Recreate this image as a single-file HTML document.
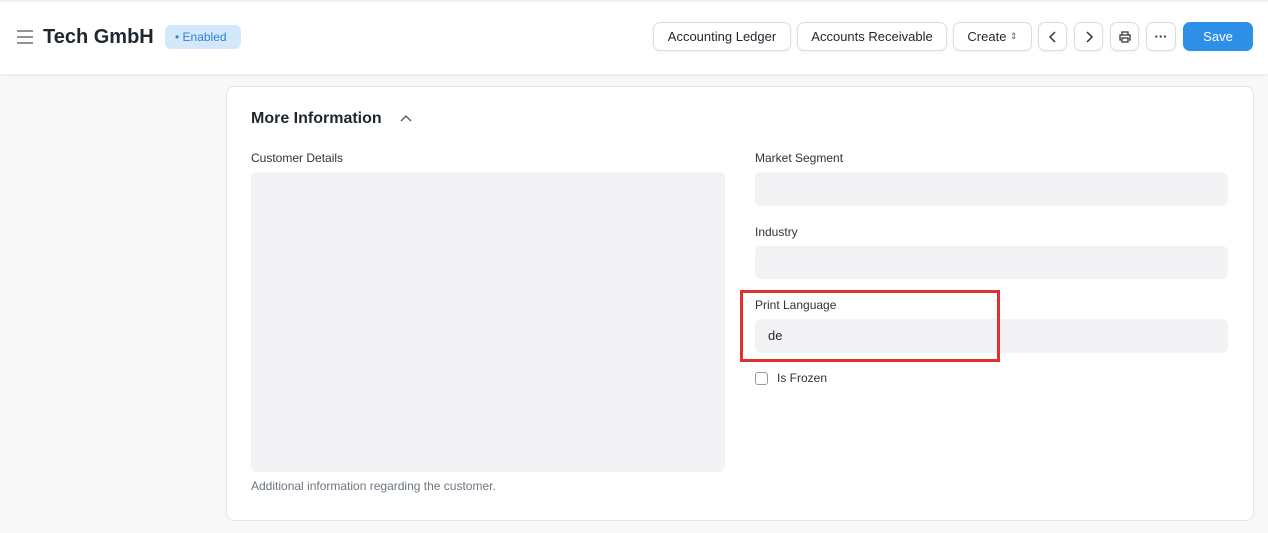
<!DOCTYPE html>
<html><head><style>
*{box-sizing:border-box;margin:0;padding:0}
body{width:1268px;height:533px;background:#f8f8f8;font-family:"Liberation Sans",sans-serif;color:#1f272e;position:relative;overflow:hidden}
.hdr{position:absolute;left:0;top:0;width:1268px;height:74px;background:#fff;box-shadow:0 1px 3px rgba(0,0,0,.08);border-top:2px solid #f0f0f0}
.abs{position:absolute}
.btn{position:absolute;top:20px;height:29px;border:1px solid #dcdcdc;border-radius:7px;background:#fff;font-size:13px;color:#1f272e;display:flex;align-items:center;justify-content:center;box-shadow:0 1px 2px rgba(0,0,0,.05)}
.card{position:absolute;left:226px;top:86px;width:1028px;height:435px;background:#fff;border:1px solid #e4e4e4;border-radius:8px}
.lbl{position:absolute;font-size:12px;color:#333}
.inp{position:absolute;background:#f3f3f5;border-radius:6px}
</style></head><body>
<div class="hdr">
 <div class="abs" style="left:17px;top:28px;width:16px">
  <div style="height:2px;background:#8d949a;margin-bottom:4px"></div><div style="height:2px;background:#8d949a;margin-bottom:4px"></div><div style="height:2px;background:#8d949a"></div></div>
 <div class="abs" style="left:43px;top:24px;font-size:20px;font-weight:bold;color:#1f272e">Tech GmbH</div>
 <div class="abs" style="left:165px;top:23px;width:76px;height:24px;background:#d4e8fc;border-radius:6px;color:#2f7fd0;font-size:12px;line-height:24px;padding-left:10px">• Enabled</div>
 <div class="btn" style="left:653px;width:138px">Accounting Ledger</div>
 <div class="btn" style="left:797px;width:150px">Accounts Receivable</div>
 <div class="btn" style="left:953px;width:79px">Create&nbsp;<span style="font-size:9px;color:#666">⇕</span></div>
 <div class="btn" style="left:1038px;width:29px"><svg width="10" height="12"><path d="M7 1L2 6l5 5" stroke="#333" stroke-width="1.5" fill="none"/></svg></div>
 <div class="btn" style="left:1074px;width:29px"><svg width="10" height="12"><path d="M3 1l5 5-5 5" stroke="#333" stroke-width="1.5" fill="none"/></svg></div>
 <div class="btn" style="left:1110px;width:29px"><svg width="14" height="14"><path d="M4 5V2h6v3M3 10H2V5h10v5h-1M4 8h6v4H4z" stroke="#333" stroke-width="1.3" fill="none"/></svg></div>
 <div class="btn" style="left:1146px;width:30px;font-weight:bold">···</div>
 <div class="btn" style="left:1183px;width:70px;background:#2d8fe8;border-color:#2d8fe8;color:#fff">Save</div>
</div>
<div class="card">
 <div class="abs" style="left:24px;top:23px;font-size:16px;font-weight:bold">More Information</div>
 <svg class="abs" style="left:172px;top:27px" width="14" height="10"><path d="M2 7l5-5 5 5" stroke="#555" stroke-width="1.3" fill="none"/></svg>
 <div class="lbl" style="left:24px;top:64px">Customer Details</div>
 <div class="inp" style="left:24px;top:85px;width:474px;height:300px"></div>
 <div class="lbl" style="left:24px;top:392px;color:#6c7680">Additional information regarding the customer.</div>
 <div class="lbl" style="left:528px;top:64px">Market Segment</div>
 <div class="inp" style="left:528px;top:85px;width:473px;height:34px"></div>
 <div class="lbl" style="left:528px;top:138px">Industry</div>
 <div class="inp" style="left:528px;top:159px;width:473px;height:33px"></div>
 <div class="lbl" style="left:528px;top:211px">Print Language</div>
 <div class="inp" style="left:528px;top:232px;width:473px;height:34px;font-size:13px;line-height:34px;padding-left:13px;color:#1f272e">de</div>
 <div class="abs" style="left:528px;top:285px;width:13px;height:13px;border:1px solid #999;border-radius:3px"></div>
 <div class="lbl" style="left:550px;top:284px">Is Frozen</div>
</div>
<div class="abs" style="left:740px;top:290px;width:260px;height:72px;border:3px solid #e03030"></div>
</body></html>
